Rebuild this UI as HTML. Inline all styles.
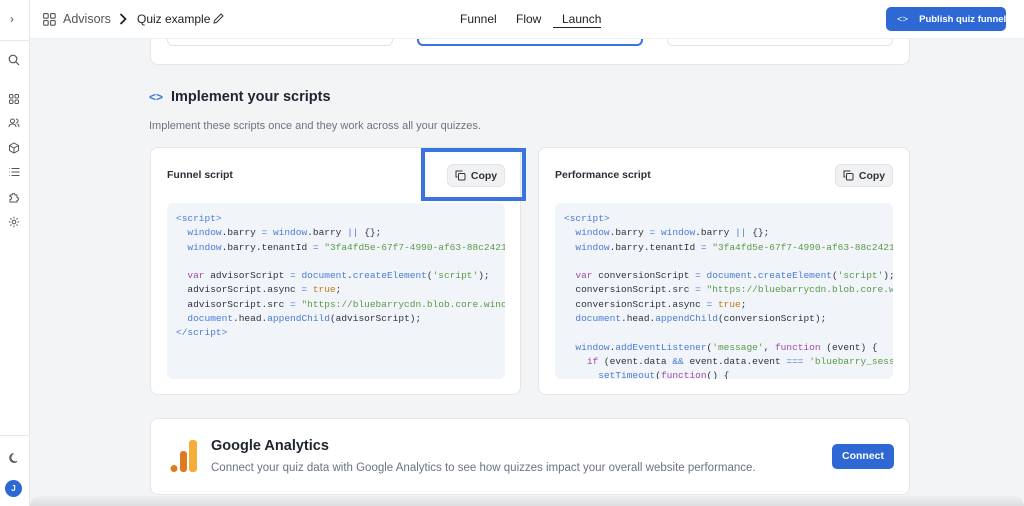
<!DOCTYPE html>
<html><head><meta charset="utf-8"><style>
*{box-sizing:border-box;margin:0;padding:0}
body{width:1024px;height:506px;overflow:hidden;background:#f3f4f5;font-family:"Liberation Sans",sans-serif;position:relative;color:#1f2430}
.abs{position:absolute;white-space:nowrap}
.side{left:0;top:0;width:30px;height:506px;background:#fff;border-right:1px solid #e6e8eb}
.hdr{left:30px;top:0;width:994px;height:39px;background:#fff;border-bottom:1px solid #eef0f3}
.card{background:#fff;border:1px solid #e4e6ea;border-radius:8px}
.code{background:#f1f4f9;border-radius:6px;font-family:"Liberation Mono",monospace;font-size:9.5px;line-height:14.3px;padding:9px 0 0 9px;white-space:pre;overflow:hidden;color:#2d3340}
.b{color:#4a7bd6}.g{color:#5a9a4a}.p{color:#a04aa8}.o{color:#c07a1a}
.copy{background:#f0f1f3;border:1px solid #e2e4e8;border-radius:6px;font-size:10.5px;font-weight:bold;color:#333;display:flex;align-items:center;justify-content:center;gap:5px}
svg{display:block}
</style></head><body>
<div class="abs side">
 <div class="abs" style="left:10px;top:12px;font-size:12px;color:#555">›</div>
 <div class="abs" style="left:0;top:40px;width:30px;border-top:1px solid #e6e8eb"></div>
 <svg class="abs" style="left:8px;top:54px" width="12" height="12" viewBox="0 0 12 12" fill="none" stroke="#555" stroke-width="1.2"><circle cx="5" cy="5" r="3.8"/><path d="M8 8l3 3"/></svg>
 <svg class="abs" style="left:9px;top:94px" width="10" height="10" viewBox="0 0 10 10" fill="none" stroke="#555" stroke-width="1"><rect x=".5" y=".5" width="3.5" height="3.5" rx="1"/><rect x="6" y=".5" width="3.5" height="3.5" rx="1"/><rect x=".5" y="6" width="3.5" height="3.5" rx="1"/><rect x="6" y="6" width="3.5" height="3.5" rx="1"/></svg>
 <svg class="abs" style="left:8px;top:118px" width="12" height="10" viewBox="0 0 12 10" fill="none" stroke="#555" stroke-width="1"><circle cx="4.5" cy="3" r="2"/><path d="M1 9c0-2 1.5-3 3.5-3S8 7 8 9M8 1a2 2 0 010 4M9.5 6c1 .5 1.5 1.5 1.5 3"/></svg>
 <svg class="abs" style="left:8px;top:142px" width="12" height="12" viewBox="0 0 12 12" fill="none" stroke="#555" stroke-width="1"><path d="M6 1l4.5 2.5v5L6 11 1.5 8.5v-5zM1.5 3.5L6 6l4.5-2.5M6 6v5"/></svg>
 <svg class="abs" style="left:8px;top:167px" width="12" height="10" viewBox="0 0 12 10" fill="none" stroke="#555" stroke-width="1"><path d="M3.5 1.5h8M3.5 5h8M3.5 8.5h8M1 1.5h.5M1 5h.5M1 8.5h.5"/></svg>
 <svg class="abs" style="left:8px;top:191px" width="12" height="12" viewBox="0 0 12 12" fill="none" stroke="#555" stroke-width="1"><path d="M2 4h2a1.5 1.5 0 013 0h2v2.5a1.5 1.5 0 010 3V11H2V8.5a1.5 1.5 0 000-3z"/></svg>
 <svg class="abs" style="left:8px;top:216px" width="12" height="12" viewBox="0 0 12 12" fill="none" stroke="#555" stroke-width="1"><circle cx="6" cy="6" r="1.8"/><path d="M6 .8v1.7M6 9.5v1.7M.8 6h1.7M9.5 6h1.7M2.3 2.3l1.2 1.2M8.5 8.5l1.2 1.2M2.3 9.7l1.2-1.2M8.5 3.5l1.2-1.2"/></svg>
 <div class="abs" style="left:0;top:435px;width:30px;border-top:1px solid #e6e8eb"></div>
 <svg class="abs" style="left:8px;top:452px" width="12" height="12" viewBox="0 0 12 12" fill="none" stroke="#555" stroke-width="1"><path d="M9 9.5A4.5 4.5 0 115.5 1.5a3.5 3.5 0 003.5 8z"/></svg>
 <div class="abs" style="left:5px;top:480px;width:17px;height:17px;border-radius:50%;background:#2d68d4;color:#fff;font-size:8px;font-weight:bold;text-align:center;line-height:17px">J</div>
</div>

<div class="abs hdr">
 <svg class="abs" style="left:13px;top:13px" width="13" height="13" viewBox="0 0 13 13" fill="none" stroke="#555" stroke-width="1.1"><rect x=".6" y=".6" width="4.6" height="4.6" rx="1"/><rect x="7.6" y=".6" width="4.6" height="4.6" rx="1"/><rect x=".6" y="7.6" width="4.6" height="4.6" rx="1"/><rect x="7.6" y="7.6" width="4.6" height="4.6" rx="1"/></svg>
 <div class="abs" style="left:33px;top:12px;font-size:12.5px;color:#555">Advisors</div>
 <svg class="abs" style="left:89px;top:13px" width="8" height="12" viewBox="0 0 8 12" fill="none" stroke="#222" stroke-width="1.8"><path d="M1.5 1l5 5-5 5"/></svg>
 <div class="abs" style="left:107px;top:12px;font-size:12px;color:#222">Quiz example</div>
 <svg class="abs" style="left:183px;top:13px" width="11" height="11" viewBox="0 0 11 11" fill="none" stroke="#333" stroke-width="1"><path d="M1 10l.5-2.5L8 1l2 2-6.5 6.5z"/></svg>
 <div class="abs" style="left:430px;top:12px;font-size:12px;color:#222">Funnel</div>
 <div class="abs" style="left:486px;top:12px;font-size:12px;color:#222">Flow</div>
 <div class="abs" style="left:532px;top:12px;font-size:12px;color:#222">Launch</div>
 <div class="abs" style="left:523px;top:27px;width:48px;border-top:1.5px solid #222"></div>
 <div class="abs" style="left:856px;top:7px;width:120px;height:24px;background:#2d68d4;border-radius:5px;color:#fff;font-size:9.5px;font-weight:bold;display:flex;align-items:center;padding-left:11px"><span style="margin-right:11px;font-weight:normal">&lt;&gt;</span>Publish quiz funnel</div>
</div>

<div class="abs card" style="left:150px;top:20px;width:760px;height:45px;border-top:none;border-radius:0 0 8px 8px;z-index:-1">
 <div class="abs" style="left:16px;top:0;width:226px;height:26px;border:1px solid #e2e5ea;border-top:none;border-radius:0 0 6px 6px"></div>
 <div class="abs" style="left:266px;top:0;width:226px;height:26px;border:2px solid #3b73e0;border-top:none;border-radius:0 0 6px 6px"></div>
 <div class="abs" style="left:516px;top:0;width:226px;height:26px;border:1px solid #e2e5ea;border-top:none;border-radius:0 0 6px 6px"></div>
</div>

<div class="abs" style="left:149px;top:90px;font-size:12px;color:#3b73e0;font-weight:bold">&lt;&gt;</div>
<div class="abs" style="left:171px;top:89px;font-size:14.5px;font-weight:bold;color:#1f2430">Implement your scripts</div>
<div class="abs" style="left:149px;top:120px;font-size:11px;color:#6b7380">Implement these scripts once and they work across all your quizzes.</div>

<div class="abs card" style="left:150px;top:147px;width:371px;height:248px">
 <div class="abs" style="left:16px;top:21px;font-size:10.5px;font-weight:bold;color:#2a2f38">Funnel script</div>
 <div class="abs copy" style="left:296px;top:16px;width:58px;height:23px"><svg width="11" height="11" viewBox="0 0 11 11" fill="none" stroke="#333" stroke-width="1"><rect x="3.5" y="3.5" width="6.5" height="6.5" rx="1"/><path d="M7 1.5V1H1v6h1.5"/></svg>Copy</div>
 <div class="abs code" style="left:16px;top:55px;width:338px;height:176px"><span class="b">&lt;script&gt;</span>
  <span class="b">window</span>.barry <span class="b">=</span> <span class="b">window</span>.barry <span class="b">||</span> {};
  <span class="b">window</span>.barry.tenantId <span class="b">=</span> <span class="g">"3fa4fd5e-67f7-4990-af63-88c2421</span>

  <span class="p">var</span> advisorScript <span class="b">=</span> <span class="b">document</span>.<span class="b">createElement</span>(<span class="g">'script'</span>);
  advisorScript.async <span class="b">=</span> <span class="o">true</span>;
  advisorScript.src <span class="b">=</span> <span class="g">"https://bluebarrycdn.blob.core.winc</span>
  <span class="b">document</span>.head.<span class="b">appendChild</span>(advisorScript);
<span class="b">&lt;/script&gt;</span></div>
</div>
<div class="abs" style="left:421px;top:148px;width:105px;height:53px;border:4px solid #3b73e0"></div>

<div class="abs card" style="left:538px;top:147px;width:372px;height:248px">
 <div class="abs" style="left:16px;top:21px;font-size:10.5px;font-weight:bold;color:#2a2f38">Performance script</div>
 <div class="abs copy" style="left:296px;top:16px;width:58px;height:23px"><svg width="11" height="11" viewBox="0 0 11 11" fill="none" stroke="#333" stroke-width="1"><rect x="3.5" y="3.5" width="6.5" height="6.5" rx="1"/><path d="M7 1.5V1H1v6h1.5"/></svg>Copy</div>
 <div class="abs code" style="left:16px;top:55px;width:338px;height:176px"><span class="b">&lt;script&gt;</span>
  <span class="b">window</span>.barry <span class="b">=</span> <span class="b">window</span>.barry <span class="b">||</span> {};
  <span class="b">window</span>.barry.tenantId <span class="b">=</span> <span class="g">"3fa4fd5e-67f7-4990-af63-88c2421</span>

  <span class="p">var</span> conversionScript <span class="b">=</span> <span class="b">document</span>.<span class="b">createElement</span>(<span class="g">'script'</span>);
  conversionScript.src <span class="b">=</span> <span class="g">"https://bluebarrycdn.blob.core.w</span>
  conversionScript.async <span class="b">=</span> <span class="o">true</span>;
  <span class="b">document</span>.head.<span class="b">appendChild</span>(conversionScript);

  <span class="b">window</span>.<span class="b">addEventListener</span>(<span class="g">'message'</span>, <span class="p">function</span> (event) {
    <span class="p">if</span> (event.data <span class="b">&amp;&amp;</span> event.data.event <span class="b">===</span> <span class="g">'bluebarry_sess</span>
      <span class="b">setTimeout</span>(<span class="p">function</span>() {</div>
</div>

<div class="abs card" style="left:150px;top:418px;width:760px;height:77px">
 <svg class="abs" style="left:19px;top:21px" width="28" height="33" viewBox="0 0 28 33"><rect x="19" y="0" width="8" height="32" rx="3" fill="#f3ad38"/><rect x="10" y="11" width="7" height="21" rx="3" fill="#e07a22"/><circle cx="4" cy="28.5" r="3.5" fill="#e07a22"/></svg>
 <div class="abs" style="left:60px;top:19px;font-size:14.5px;font-weight:bold;color:#1f2430">Google Analytics</div>
 <div class="abs" style="left:60px;top:43px;font-size:11.5px;color:#6b7380">Connect your quiz data with Google Analytics to see how quizzes impact your overall website performance.</div>
 <div class="abs" style="left:681px;top:25px;width:62px;height:25px;background:#2d68d4;border-radius:5px;color:#fff;font-size:10.5px;font-weight:bold;text-align:center;line-height:25px">Connect</div>
</div>
<div class="abs" style="left:30px;top:496px;width:994px;height:10px;background:linear-gradient(#eceef0,#dcdfe2);border-radius:20px 20px 0 0"></div>
</body></html>
